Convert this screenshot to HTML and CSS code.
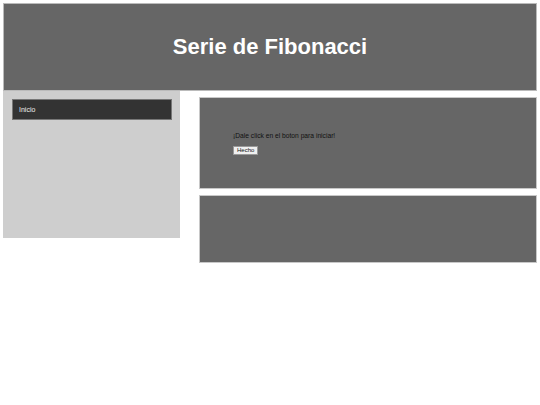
FILE: index.html
```html
<!DOCTYPE html>
<html lang="es">
<head>
<meta charset="utf-8">
<title>Serie de Fibonacci</title>
<link rel="stylesheet" href="styles.css">
</head>
<body>
<header class="header">
  <h1 class="title">Serie de Fibonacci</h1>
</header>
<div class="layout">
  <nav class="sidebar">
    <div class="nav-item">Inicio</div>
  </nav>
  <main class="content">
    <section class="panel panel-top">
      <p class="message">¡Dale click en el boton para iniciar!</p>
      <button class="btn">Hecho</button>
    </section>
    <section class="panel panel-bottom"></section>
  </main>
</div>
</body>
</html>
```
FILE: styles.css
```css
* { box-sizing: border-box; }
html, body { margin: 0; padding: 0; background: #fff; }
body {
  padding: 3px;
  font-family: "Liberation Sans", Arial, sans-serif;
}
.header {
  width: 534px;
  height: 88px;
  background: #666;
  border: 1px solid #bbb;
  display: flex;
  align-items: center;
  justify-content: center;
}
.title {
  margin: 0;
  color: #fff;
  font-size: 22px;
  font-weight: bold;
}
.layout {
  display: flex;
  align-items: flex-start;
  gap: 19px;
}
.sidebar {
  width: 177px;
  height: 147px;
  background: #cecece;
  padding: 8px 8px 0 9px;
}
.nav-item {
  height: 21px;
  background: #333;
  border: 1px solid #777;
  color: #eee;
  font-size: 7px;
  padding-left: 6px;
  display: flex;
  align-items: center;
}
.content {
  width: 338px;
  margin-top: 6px;
  display: flex;
  flex-direction: column;
  gap: 6px;
}
.panel {
  background: #666;
  border: 1px solid #c8c8c8;
}
.panel-top {
  height: 92px;
  padding: 34px 0 0 33px;
}
.panel-bottom { height: 68px; }
.message {
  margin: 0 0 7px 0;
  font-size: 6.7px;
  color: #111;
}
.btn {
  font-family: "Liberation Sans", Arial, sans-serif;
  font-size: 6px;
  height: 9px;
  padding: 0 3px;
  line-height: 7px;
  background: #f0f0f0;
  border: 1px solid #999;
  color: #111;
  border-radius: 0;
  display: block;
}
```
